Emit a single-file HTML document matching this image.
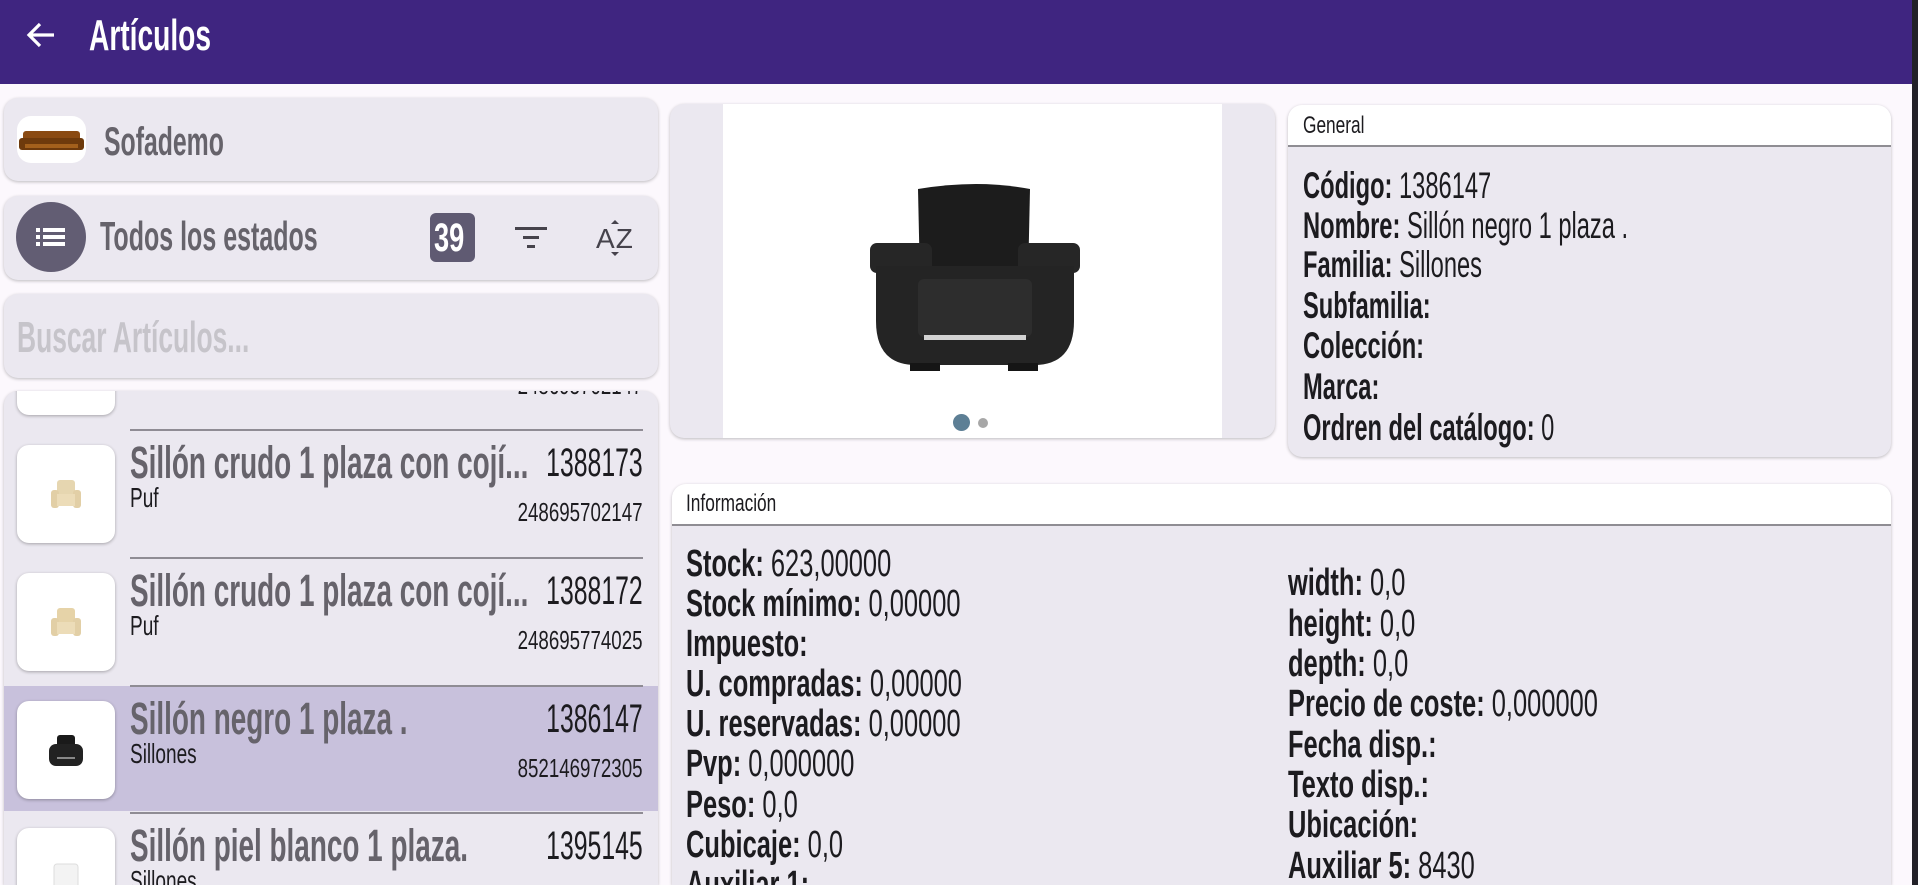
<!DOCTYPE html>
<html><head><meta charset="utf-8"><style>
*{margin:0;padding:0;box-sizing:border-box}
html,body{width:1918px;height:885px;overflow:hidden}
body{background:#fcf8fd;position:relative;font-family:"Liberation Sans",Arial,sans-serif;color:#1c1b1f}
.a{position:absolute}
.t{position:absolute;white-space:nowrap;line-height:1;transform:scaleX(.64);transform-origin:left center}
.r{transform-origin:right center;text-align:right}
.card{position:absolute;background:#ebe8f0;border-radius:14px;box-shadow:0 1px 3px rgba(0,0,0,.25)}
.b{font-weight:bold}
.thumb{position:absolute;left:17px;width:98px;height:98px;background:#fff;border-radius:12px;box-shadow:0 1px 3px rgba(0,0,0,.3)}
.sep{position:absolute;left:130px;width:513px;height:2px;background:#8f8c94}
.ti{font-size:45px;font-weight:bold;color:#66636b;transform:scaleX(.62)}
.cd{font-size:40px;right:1275px;transform:scaleX(.62);transform-origin:right center}
.bc{font-size:26px;right:1275px;transform:scaleX(.72);transform-origin:right center}
.sub{font-size:28px;transform:scaleX(.68)}
.lab{font-size:37px}
.inf{font-size:38px;transform:scaleX(.67)}
</style></head><body>
<!-- header -->
<div class="a" style="left:0;top:0;width:1912px;height:84px;background:#3f2580"></div>
<div class="a" style="left:1912px;top:0;width:6px;height:885px;background:#222128"></div>
<svg class="a" style="left:25px;top:21px" width="32" height="28" viewBox="0 0 32 28"><path d="M29 14H5M15 3L4 14l11 11" fill="none" stroke="#fff" stroke-width="3.2"/></svg>
<div class="t b" style="left:89px;top:14px;font-size:44px;color:#fff">Artículos</div>

<!-- Sofademo card -->
<div class="card" style="left:4px;top:98px;width:654px;height:83px"></div>
<div class="a" style="left:17px;top:116px;width:69px;height:47px;background:#fff;border-radius:14px"></div>
<svg class="a" style="left:17px;top:116px" width="69" height="47" viewBox="0 0 69 47"><rect x="6" y="15" width="57" height="14" rx="3" fill="#8a4a12"/><rect x="2" y="22" width="65" height="12" rx="3" fill="#6e3a0c"/><rect x="8" y="28" width="53" height="4" fill="#a3601c"/></svg>
<div class="t b" style="left:104px;top:122px;font-size:40px;color:#66636b;transform:scaleX(.62)">Sofademo</div>

<!-- estados card -->
<div class="card" style="left:4px;top:196px;width:654px;height:84px"></div>
<div class="a" style="left:16px;top:202px;width:70px;height:70px;border-radius:50%;background:#625d73"></div>
<svg class="a" style="left:36px;top:225px" width="30" height="24" viewBox="0 0 30 24"><g fill="#fff"><rect x="0" y="3" width="4" height="4"/><rect x="7" y="3" width="22" height="4"/><rect x="0" y="10" width="4" height="4"/><rect x="7" y="10" width="22" height="4"/><rect x="0" y="17" width="4" height="4"/><rect x="7" y="17" width="22" height="4"/></g></svg>
<div class="t b" style="left:100px;top:216px;font-size:41px;color:#66636b;transform:scaleX(.61)">Todos los estados</div>
<div class="a" style="left:430px;top:213px;width:45px;height:49px;background:#5f5a72;border-radius:6px"></div>
<div class="t b" style="left:434px;top:218px;font-size:40px;color:#fff;transform:scaleX(.68)">39</div>
<svg class="a" style="left:512px;top:224px" width="38" height="28" viewBox="0 0 38 28"><g fill="#46434c"><rect x="3" y="3" width="32" height="3"/><rect x="11" y="12" width="16" height="3"/><rect x="15" y="21" width="8" height="3"/></g></svg>
<div class="a" style="left:596px;top:225px;font-size:28px;line-height:1;color:#46434c;white-space:nowrap">A<span style="margin-left:1px">Z</span></div>
<svg class="a" style="left:608px;top:217px" width="14" height="42" viewBox="0 0 14 42"><path d="M3 7l4-4 4 4z" fill="#46434c"/><path d="M3 35l4 4 4-4z" fill="#46434c"/></svg>

<!-- search card -->
<div class="card" style="left:4px;top:294px;width:654px;height:84px"></div>
<div class="t b" style="left:17px;top:316px;font-size:44px;color:#c6c4ca;transform:scaleX(.6)">Buscar Artículos...</div>

<!-- list -->
<div class="a" style="left:4px;top:391px;width:654px;height:494px;overflow:hidden;border-radius:14px 14px 0 0;background:#ebe8f0;box-shadow:0 1px 3px rgba(0,0,0,.25)">
  <div class="a" style="left:0;top:295px;width:654px;height:125px;background:#c8c1dc"></div>
</div>
<div class="a" style="left:0;top:391px;width:660px;height:494px;overflow:hidden">
  <div class="thumb" style="top:-74px"></div>
  <div class="t bc" style="top:-19px;right:17px">248695702147</div>
</div>
<!-- item 0 -->
<div class="sep" style="top:429px"></div>
<div class="thumb" style="top:445px"></div>
<svg class="a" style="left:48px;top:478px" width="36" height="34" viewBox="0 0 36 34"><rect x="9" y="2" width="18" height="16" rx="3" fill="#e6d6b0"/><rect x="3" y="12" width="8" height="18" rx="3" fill="#e2cfa6"/><rect x="25" y="12" width="8" height="18" rx="3" fill="#e2cfa6"/><rect x="9" y="16" width="18" height="12" fill="#ecdcb8"/></svg>
<div class="t ti" style="left:130px;top:440px">Sillón crudo 1 plaza con cojí...</div>
<div class="t cd" style="top:443px">1388173</div>
<div class="t sub" style="left:130px;top:484px">Puf</div>
<div class="t bc" style="top:499px">248695702147</div>
<!-- item 1 -->
<div class="sep" style="top:557px"></div>
<div class="thumb" style="top:573px"></div>
<svg class="a" style="left:48px;top:606px" width="36" height="34" viewBox="0 0 36 34"><rect x="9" y="2" width="18" height="16" rx="3" fill="#e6d3a8"/><rect x="3" y="12" width="8" height="18" rx="3" fill="#e2cfa6"/><rect x="25" y="12" width="8" height="18" rx="3" fill="#e2cfa6"/><rect x="9" y="16" width="18" height="12" fill="#ecdcb8"/></svg>
<div class="t ti" style="left:130px;top:568px">Sillón crudo 1 plaza con cojí...</div>
<div class="t cd" style="top:571px">1388172</div>
<div class="t sub" style="left:130px;top:612px">Puf</div>
<div class="t bc" style="top:627px">248695774025</div>
<!-- item 2 selected -->
<div class="sep" style="top:685px"></div>
<div class="thumb" style="top:701px"></div>
<svg class="a" style="left:46px;top:733px" width="40" height="36" viewBox="0 0 40 36"><rect x="11" y="2" width="18" height="16" rx="3" fill="#1a1a1a"/><rect x="3" y="11" width="34" height="22" rx="7" fill="#222"/><rect x="11" y="24" width="18" height="2" fill="#888"/></svg>
<div class="t ti" style="left:130px;top:696px">Sillón negro 1 plaza .</div>
<div class="t cd" style="top:699px">1386147</div>
<div class="t sub" style="left:130px;top:740px">Sillones</div>
<div class="t bc" style="top:755px">852146972305</div>
<!-- item 3 -->
<div class="sep" style="top:812px"></div>
<div class="thumb" style="top:828px"></div>
<svg class="a" style="left:48px;top:862px" width="36" height="30" viewBox="0 0 36 30"><rect x="6" y="2" width="24" height="26" rx="3" fill="#f3f3f3" stroke="#ddd"/></svg>
<div class="t ti" style="left:130px;top:823px">Sillón piel blanco 1 plaza.</div>
<div class="t cd" style="top:826px">1395145</div>
<div class="t sub" style="left:130px;top:867px">Sillones</div>

<!-- image card -->
<div class="card" style="left:670px;top:104px;width:605px;height:334px;overflow:hidden">
  <div class="a" style="left:53px;top:0;width:499px;height:334px;background:#fff"></div>
</div>
<svg class="a" style="left:868px;top:181px" width="214" height="194" viewBox="0 0 214 194">
  <path d="M50 8 Q110 -2 162 8 L160 100 L52 100 Z" fill="#1c1c1c"/>
  <rect x="2" y="62" width="62" height="30" rx="7" fill="#262626"/>
  <rect x="150" y="62" width="62" height="30" rx="7" fill="#262626"/>
  <path d="M8 85 H206 V140 Q206 184 166 184 H48 Q8 184 8 140 Z" fill="#242424"/>
  <rect x="50" y="98" width="114" height="58" rx="6" fill="#2d2d2d"/>
  <rect x="56" y="154" width="102" height="5" fill="#d2d2d2"/>
  <rect x="42" y="182" width="30" height="8" fill="#151515"/><rect x="140" y="182" width="30" height="8" fill="#151515"/>
</svg>
<div class="a" style="left:953px;top:414px;width:17px;height:17px;border-radius:50%;background:#5d7f95"></div>
<div class="a" style="left:978px;top:418px;width:10px;height:10px;border-radius:50%;background:#a7a7a7"></div>

<!-- General card -->
<div class="card" style="left:1288px;top:105px;width:603px;height:352px;overflow:hidden">
  <div class="a" style="left:0;top:0;width:603px;height:40px;background:#fff"></div>
  <div class="a" style="left:0;top:40px;width:603px;height:2px;background:#8f8d93"></div>
</div>
<div class="t" style="left:1303px;top:114px;font-size:24px;transform:scaleX(.72)">General</div>
<div class="t lab" style="left:1303px;top:167px"><b>Código:</b> 1386147</div>
<div class="t lab" style="left:1303px;top:207px"><b>Nombre:</b> Sillón negro 1 plaza .</div>
<div class="t lab" style="left:1303px;top:246px"><b>Familia:</b> Sillones</div>
<div class="t lab" style="left:1303px;top:287px"><b>Subfamilia:</b></div>
<div class="t lab" style="left:1303px;top:327px"><b>Colección:</b></div>
<div class="t lab" style="left:1303px;top:368px"><b>Marca:</b></div>
<div class="t lab" style="left:1303px;top:409px"><b>Ordren del catálogo:</b> 0</div>

<!-- Información card -->
<div class="card" style="left:672px;top:484px;width:1219px;height:401px;overflow:hidden;border-radius:14px 14px 0 0">
  <div class="a" style="left:0;top:0;width:1219px;height:40px;background:#fff"></div>
  <div class="a" style="left:0;top:40px;width:1219px;height:2px;background:#8f8d93"></div>
</div>
<div class="t" style="left:686px;top:492px;font-size:24px;transform:scaleX(.72)">Información</div>
<div class="a" style="left:0;top:0;width:1918px;height:885px;overflow:hidden">
<div class="t inf" style="left:686px;top:545px"><b>Stock:</b> 623,00000</div>
<div class="t inf" style="left:686px;top:585px"><b>Stock mínimo:</b> 0,00000</div>
<div class="t inf" style="left:686px;top:625px"><b>Impuesto:</b></div>
<div class="t inf" style="left:686px;top:665px"><b>U. compradas:</b> 0,00000</div>
<div class="t inf" style="left:686px;top:705px"><b>U. reservadas:</b> 0,00000</div>
<div class="t inf" style="left:686px;top:745px"><b>Pvp:</b> 0,000000</div>
<div class="t inf" style="left:686px;top:786px"><b>Peso:</b> 0,0</div>
<div class="t inf" style="left:686px;top:826px"><b>Cubicaje:</b> 0,0</div>
<div class="t inf" style="left:686px;top:866px"><b>Auxiliar 1:</b></div>
<div class="t inf" style="left:1288px;top:564px"><b>width:</b> 0,0</div>
<div class="t inf" style="left:1288px;top:605px"><b>height:</b> 0,0</div>
<div class="t inf" style="left:1288px;top:645px"><b>depth:</b> 0,0</div>
<div class="t inf" style="left:1288px;top:685px"><b>Precio de coste:</b> 0,000000</div>
<div class="t inf" style="left:1288px;top:726px"><b>Fecha disp.:</b></div>
<div class="t inf" style="left:1288px;top:766px"><b>Texto disp.:</b></div>
<div class="t inf" style="left:1288px;top:806px"><b>Ubicación:</b></div>
<div class="t inf" style="left:1288px;top:847px"><b>Auxiliar 5:</b> 8430</div>
</div>
</body></html>
